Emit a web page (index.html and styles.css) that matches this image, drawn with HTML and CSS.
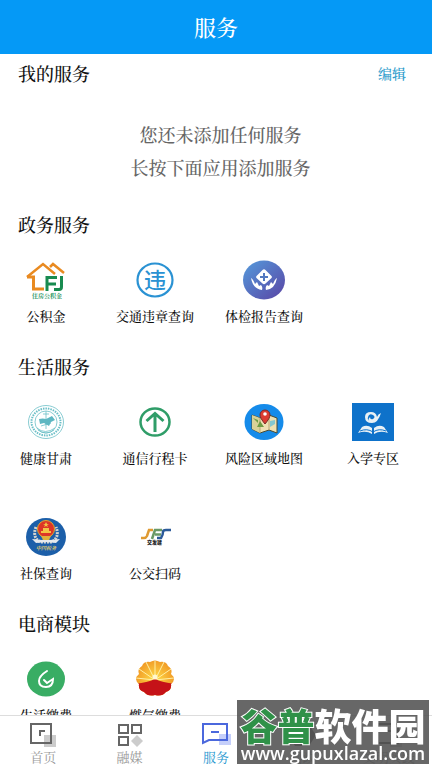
FILE: index.html
```html
<!DOCTYPE html>
<html lang="zh-CN">
<head>
    <meta charset="UTF-8">
    <meta name="viewport" content="width=device-width, initial-scale=1.0">
    <title>服务</title>
    <link rel="stylesheet" href="styles.css">
</head>
<body>
    <header class="topbar">
        <h1>服务</h1>
    </header>

    <main class="content">
        <section class="section">
            <div class="section-head">
                <h2>我的服务</h2>
                <button class="edit" type="button">编辑</button>
            </div>
            <div class="empty">
                <p>您还未添加任何服务</p>
                <p>长按下面应用添加服务</p>
            </div>
        </section>

        <section class="section">
            <h2>政务服务</h2>
            <div class="grid">
                <a class="item" href="#">
                    <svg class="icon" viewBox="0 0 42 42">
                        <path d="M2 18 18 5l12 10M25 8l3-3 11 9" fill="none" stroke="#e98a20" stroke-width="2.500"/>
                        <path d="M2 18h6.500v12H19" fill="none" stroke="#e98a20" stroke-width="3"/>
                        <path d="M22 32V18.500h10M22 25h9M36.500 17v11q0 2.500-2.500 2.500h-5" fill="none" stroke="#188b50" stroke-width="3"/>
                        <text x="7" y="39" font-size="6" font-weight="700" fill="#279461">住房公积金</text>
                    </svg>
                    <span>公积金</span>
                </a>
                <a class="item" href="#">
                    <svg class="icon" viewBox="0 0 42 42">
                        <ellipse cx="21" cy="21" rx="17.500" ry="16.500" fill="none" stroke="#2a92d3" stroke-width="2.200"/>
                        <text x="10" y="29" font-family="Noto Sans CJK SC" font-size="22" font-weight="500" fill="#2a92d3">违</text>
                    </svg>
                    <span>交通违章查询</span>
                </a>
                <a class="item" href="#">
                    <svg class="icon" viewBox="0 0 42 42">
                        <defs>
                            <linearGradient id="health" x1="0" y1="0" x2="1" y2="1">
                                <stop offset="0" stop-color="#559bdc"/>
                                <stop offset="1" stop-color="#5944a4"/>
                            </linearGradient>
                        </defs>
                        <ellipse cx="21" cy="21" rx="21" ry="19.500" fill="url(#health)"/>
                        <path d="M19.500 11q1.500-1.500 3 0l6 6q1 1 0 2l-6 5.500q-1.500 1.500-3 0l-6-5.500q-1-1 0-2z" fill="#fff"/>
                        <path d="M21 14v8M17 18h8" stroke="#5379c0" stroke-width="2"/>
                        <path d="M8 19q2 1 4 6l2-2 2 4 2-1q2 2 1 5-9-1-11-12zM34 19q-2 1-4 6l-2-2-2 4-2-1q-2 2-1 5 9-1 11-12z" fill="#fff"/>
                    </svg>
                    <span>体检报告查询</span>
                </a>
            </div>
        </section>

        <section class="section">
            <h2>生活服务</h2>
            <div class="grid">
                <a class="item" href="#">
                    <svg class="icon" viewBox="0 0 42 42">
                        <g fill="none" stroke="#6bbfc7">
                            <ellipse cx="21" cy="21" rx="17.500" ry="16.500" stroke-width=".8"/>
                            <ellipse cx="21" cy="21" rx="14.500" ry="13.500" stroke-width="2" stroke-dasharray="1.500 1"/>
                            <circle cx="21" cy="21" r="11" stroke-width=".8"/>
                            <path d="M12 27q8 7 18 0M13 29q8 6 16 0M21 10v18M18 13h6M16 25l10-3" stroke-width=".8"/>
                        </g>
                        <path d="M14 18q4-1 7 0l6-3 3 4-4 2-2 4-5-3-4 1z" fill="#5eb7c2"/>
                    </svg>
                    <span>健康甘肃</span>
                </a>
                <a class="item" href="#">
                    <svg class="icon" viewBox="0 0 42 42">
                        <ellipse cx="21" cy="21" rx="14.500" ry="13.500" fill="none" stroke="#2f9d68" stroke-width="2.500"/>
                        <path d="M21 31V13M12.500 20 21 12.500 29.500 20" fill="none" stroke="#2f9d68" stroke-width="3"/>
                    </svg>
                    <span>通信行程卡</span>
                </a>
                <a class="item" href="#">
                    <svg class="icon" viewBox="0 0 42 42">
                        <ellipse cx="21" cy="21" rx="19.500" ry="18" fill="#158bea"/>
                        <path d="M9 14l8 3 9-3 8 3v15l-8-3-9 3-8-4z" fill="#eee1b3" stroke="#4a4a32"/>
                        <path d="M9 14l8 3v15l-8-4z" fill="#d9d198"/>
                        <path d="M17 17v15M26 15v14" stroke="#b6a775"/>
                        <path d="M14 26l3-6 4 6zM10 17l5 2v3z" fill="#6f9c44"/>
                        <path d="M27 20l5-1v4l-5 3z" fill="#83c7d0"/>
                        <path d="M22 23q-5-6-5-9a5 5 0 0 1 10 0q0 3-5 9z" fill="#dc3c31" stroke="#7b2b25"/>
                        <circle cx="22" cy="13" r="1.800" fill="#fff"/>
                    </svg>
                    <span>风险区域地图</span>
                </a>
                <a class="item" href="#">
                    <svg class="icon" viewBox="0 0 42 42">
                        <path d="M0 2h42v38H0z" fill="#0e72ca"/>
                        <path d="M29 12q-3 1-4 4-1-5-6-5-6 0-6 5 0 6 7 6 6 0 9-10zM16 16q1-4 5-2 3 2 0 4-3 1-3-2-3 3 0 4-3-1-2-4z" fill="#e9f1f5" fill-rule="evenodd"/>
                        <path d="M20 27q-5-4-10-1l-4 6q8-3 14 1zM22 27q5-4 10-1l4 6q-8-3-14 1z" fill="#e9f1f5"/>
                        <path d="M8 30q7-3 13 1 6-4 13-1" fill="none" stroke="#0e72ca"/>
                    </svg>
                    <span>入学专区</span>
                </a>
                <a class="item" href="#">
                    <svg class="icon" viewBox="0 0 42 42">
                        <ellipse cx="21" cy="21" rx="20" ry="19" fill="#1c5fa9"/>
                        <path d="M11 11q-4 10 4 15h12q8-5 4-15" fill="none" stroke="#d4d4cd" stroke-width="3" stroke-dasharray="2 1"/>
                        <path d="M7 23l10 1 4-1 4 1 10-1-4 4-10-1-10 1z" fill="#e5e9ed"/>
                        <circle cx="21" cy="13" r="8.500" fill="#dd3527" stroke="#e5a72c"/>
                        <path d="M21 6l1 2h2l-2 1 1 2-2-1-2 1 1-2-2-1h2zM16 15h10v2H16zM18 12h6v3h-6z" fill="#f3c344"/>
                        <path d="M16 20h10l-2 4h-6z" fill="#dfb13c"/>
                        <text x="11" y="34" font-size="5" font-style="italic" font-weight="700" fill="#e6cf6a">中国税务</text>
                    </svg>
                    <span>社保查询</span>
                </a>
                <a class="item" href="#">
                    <svg class="icon" viewBox="0 0 42 42">
                        <g fill="none" stroke-width="2.500">
                            <path d="M7 22h3q2 0 3-2l2-6h4" stroke="#df9a32"/>
                            <path d="M18 23l3-9h7M21 18.500h6" stroke="#6a9966"/>
                            <path d="M37 14h-5q-3 0-3 2 0 3-2 6h-4" stroke="#2b5a99"/>
                        </g>
                        <text x="13" y="28" font-family="Noto Sans CJK SC" font-size="5" font-weight="900" fill="#222">交发建</text>
                    </svg>
                    <span>公交扫码</span>
                </a>
            </div>
        </section>

        <section class="section">
            <h2>电商模块</h2>
            <div class="grid">
                <a class="item" href="#">
                    <svg class="icon" viewBox="0 0 42 42">
                        <ellipse cx="21" cy="21" rx="19" ry="17.500" fill="#39ad64"/>
                        <path d="M22 13q-8 5-8 10 0 6 7 6 7 0 7-8l-6 4-3-3" fill="none" stroke="#fff" stroke-width="2" stroke-linecap="round"/>
                    </svg>
                    <span>生活缴费</span>
                </a>
                <a class="item" href="#">
                    <svg class="icon" viewBox="0 0 42 42">
                        <defs>
                            <radialGradient id="sun" cx=".5" cy=".5" r=".6">
                                <stop offset="0" stop-color="#ffdd49"/>
                                <stop offset="1" stop-color="#ed861b"/>
                            </radialGradient>
                            <clipPath id="flower">
                                <path d="M16 4q5-3 10 0 6-1 8 4 5 3 3 8 6 5 0 10 1 6-5 8-4 5-11 3-7 2-11-3-6-2-5-8-6-5 0-10-2-5 3-8 2-5 8-4z"/>
                            </clipPath>
                        </defs>
                        <g clip-path="url(#flower)">
                            <path d="M0 0h42v42H0z" fill="url(#sun)"/>
                            <path d="M21 22V3M21 22 12 4M21 22 30 4M21 22 5 11M21 22 37 11M21 22 2 20M21 22 40 20" stroke="#fff0a5"/>
                            <path d="M0 26q12-1 21-5 9 4 21 5v16H0z" fill="#c51218"/>
                            <circle cx="21" cy="19" r="2.500" fill="#fff8d0"/>
                        </g>
                    </svg>
                    <span>燃气缴费</span>
                </a>
            </div>
        </section>
    </main>

    <nav class="tabbar">
        <a class="tab" href="#">
            <svg class="tab-icon" viewBox="0 0 28 26">
                <path d="M15 13h12v12H15z" fill="#ccc"/>
                <path d="M2 2h20v19H2zM11 14V9h5" fill="none" stroke="#666" stroke-width="2"/>
            </svg>
            <span>首页</span>
        </a>
        <a class="tab" href="#">
            <svg class="tab-icon" viewBox="0 0 28 26">
                <path d="M3 3h9v8H3zM16 3h9v8h-9zM3 15h9v8H3z" fill="none" stroke="#666" stroke-width="2"/>
                <path d="M21 13l6 6-6 6-6-6z" fill="#ccc"/>
            </svg>
            <span>融媒</span>
        </a>
        <a class="tab active" href="#">
            <svg class="tab-icon" viewBox="0 0 28 26">
                <path d="M17 12h12v11H17z" fill="#c5cffa"/>
                <path d="M1 2h24v16H7l-6 3zM9 10h8" fill="none" stroke="#4b68dd" stroke-width="2"/>
            </svg>
            <span>服务</span>
        </a>
        <a class="tab" href="#">
            <svg class="tab-icon" viewBox="0 0 28 26">
                <path d="M7 3h14l7 10-7 11H7L0 13z" fill="#555"/>
            </svg>
            <span>问政</span>
        </a>
        <a class="tab" href="#">
            <svg class="tab-icon" viewBox="0 0 28 26">
                <path d="M15 13h12v12H15z" fill="#ccc"/>
                <path d="M3 2h20v19H3zM9 9h8" fill="none" stroke="#555" stroke-width="2"/>
            </svg>
            <span>文明实践</span>
        </a>
    </nav>

    <div class="watermark">
        <div class="mark-name"><span class="mark-green">谷普</span>软件园</div>
        <div class="mark-url">www.gupuxlazal.com</div>
    </div>
</body>
</html>
```
FILE: styles.css
```css
* {
    box-sizing: border-box;
}
body, html {
    margin: 0;
    padding: 0;
    height: 100%;
}
body {
    display: flex;
    flex-direction: column;
    overflow: hidden;
    background: #fff;
    color: #111;
    font-family: "Noto Serif CJK SC", "Noto Sans CJK SC", serif;
}
h1, h2, p {
    margin: 0;
    font-weight: 500;
}
a {
    color: inherit;
    text-decoration: none;
}
.topbar {
    flex: none;
    padding: 11px 0;
    background: #0599f6;
    color: #fff;
    text-align: center;
}
h1 {
    font-size: 22px;
    line-height: 32px;
}
.content {
    flex: 1;
    min-height: 0;
    overflow: hidden;
    padding-top: 7px;
}
.section {
    padding-bottom: 28px;
}
h2 {
    padding-left: 18px;
    font-size: 18px;
    line-height: 24px;
}
.section-head {
    display: flex;
    justify-content: space-between;
    align-items: center;
    padding-right: 26px;
}
.edit {
    border: 0;
    padding: 0;
    background: none;
    color: #2b9bcb;
    font-family: inherit;
    font-size: 14px;
    font-weight: 500;
    line-height: 24px;
}
.empty {
    padding: 33px 0 0 9px;
    color: #666;
    font-size: 18px;
    line-height: 33px;
    text-align: center;
}
.grid {
    display: grid;
    grid-template-columns: repeat(4, 1fr);
    gap: 48px 29px;
    padding: 23px 19px 0 6px;
}
.item {
    display: flex;
    flex-direction: column;
    align-items: center;
    gap: 5px;
    font-size: 13px;
    font-weight: 500;
    line-height: 20px;
    white-space: nowrap;
}
.icon {
    width: 42px;
    height: 42px;
}
.tabbar {
    flex: none;
    display: flex;
    padding: 6px 0 2px;
    border-top: 1px solid #ddd;
    background: #fff;
}
.tab {
    flex: 1;
    display: flex;
    flex-direction: column;
    align-items: center;
    color: #999;
    font-size: 13px;
    line-height: 18px;
}
.tab-icon {
    width: 28px;
    height: 26px;
    overflow: visible;
}
.active {
    color: #2797cf;
}
.watermark {
    position: fixed;
    right: 3px;
    bottom: 4px;
    width: 192px;
    height: 64px;
    padding-top: 6px;
    background: rgba(82, 82, 82, 0.88);
    color: #fff;
    text-align: center;
    white-space: nowrap;
    pointer-events: none;
}
.mark-name {
    font-family: "Noto Sans CJK SC", sans-serif;
    font-size: 37px;
    font-weight: 900;
    line-height: 38px;
}
.mark-green {
    color: #2f9148;
    -webkit-text-stroke: 2px #fff;
    paint-order: stroke fill;
}
.mark-url {
    font-family: "Open Sans", sans-serif;
    font-size: 18px;
    font-weight: 600;
    line-height: 18px;
}
```
